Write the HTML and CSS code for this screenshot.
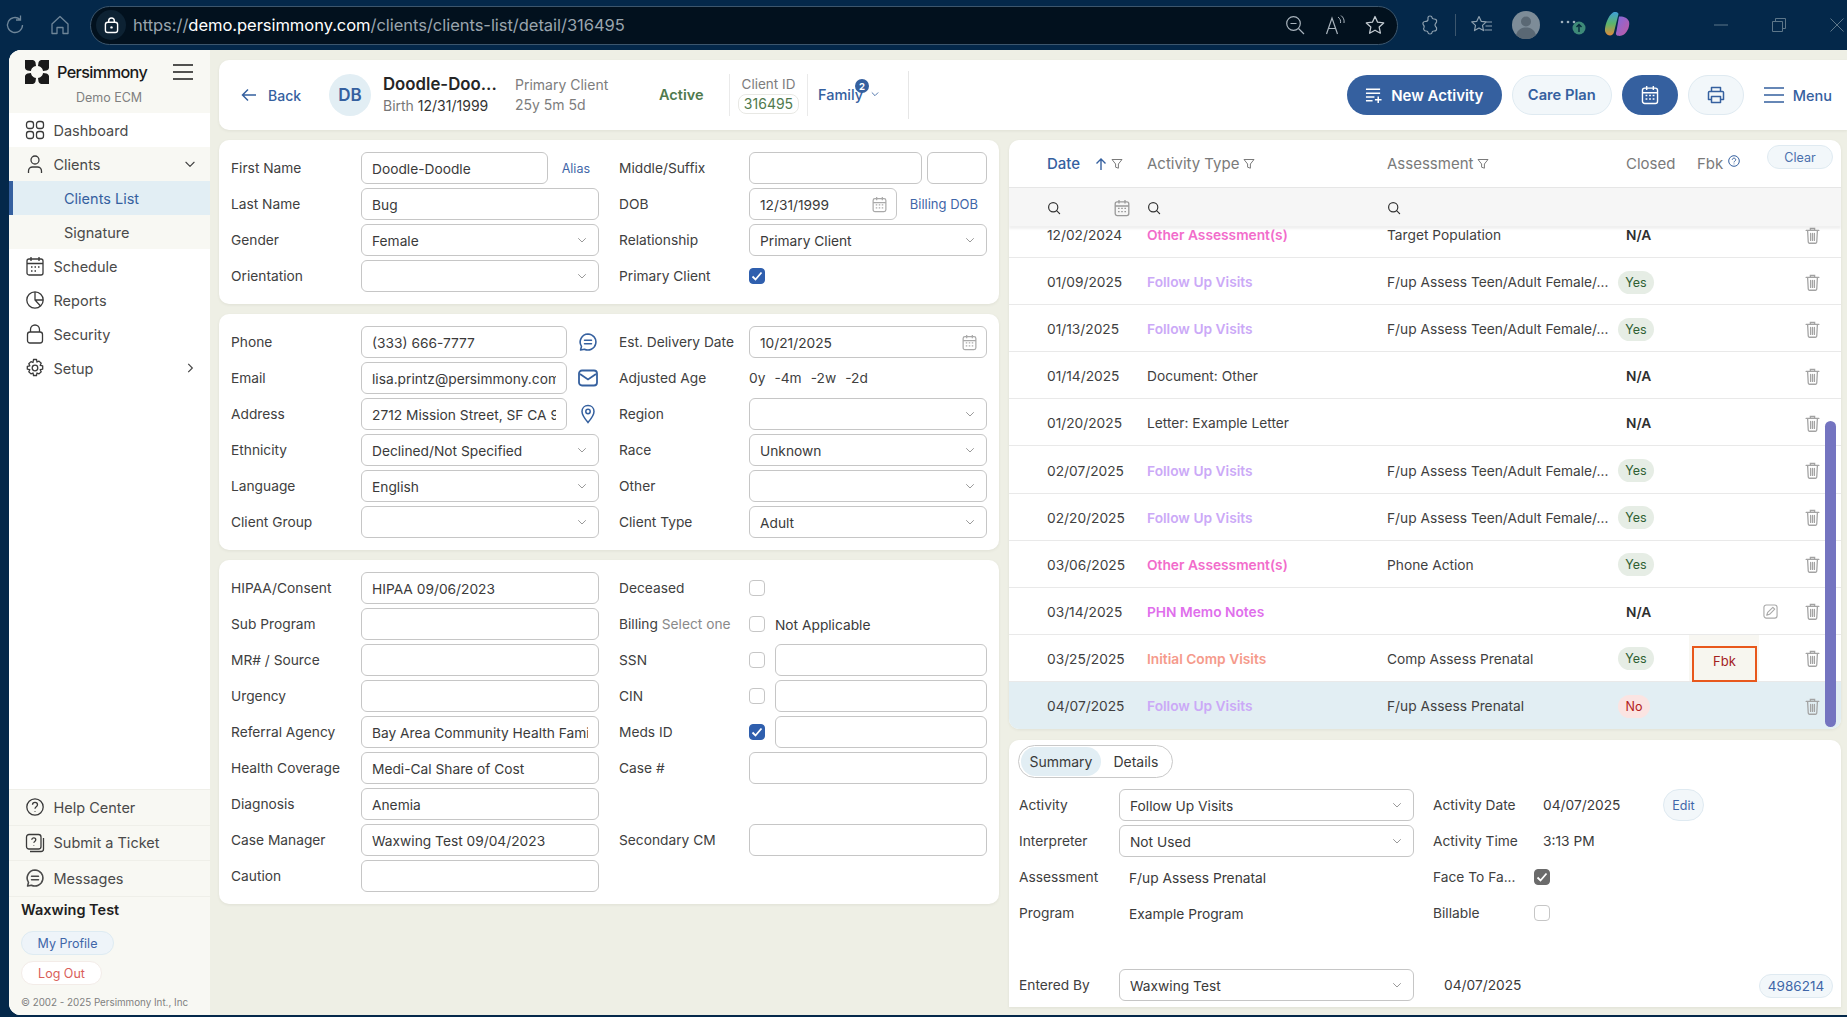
FILE: index.html
```html
<!DOCTYPE html>
<html lang="en">
<head>
<meta charset="utf-8">
<title>Persimmony - Client Detail</title>
<link rel="stylesheet" href="styles.css">
</head>
<body>
<svg class="sprite" xmlns="http://www.w3.org/2000/svg">
  <symbol id="chev" viewBox="0 0 12 12"><path d="M2.5 4.5 6 8l3.5-3.5" fill="none" stroke="currentColor" stroke-width="1" stroke-linecap="round" stroke-linejoin="round"/></symbol>
  <symbol id="cal" viewBox="0 0 16 18"><rect x="1.2" y="2.8" width="13.6" height="13.8" rx="2" fill="none" stroke="currentColor" stroke-width="1.3"/><path d="M1.2 7h13.6M5 1v3.4M11 1v3.4" fill="none" stroke="currentColor" stroke-width="1.3"/><path d="M4 9.4h1.6M7.2 9.4h1.6M10.4 9.4H12M4 12.6h1.6M7.2 12.6h1.6M10.4 12.6H12" stroke="currentColor" stroke-width="1.4"/></symbol>
  <symbol id="search" viewBox="0 0 14 14"><circle cx="6.2" cy="6.2" r="4.6" fill="none" stroke="currentColor" stroke-width="1.2"/><path d="m9.6 9.6 3 3" stroke="currentColor" stroke-width="1.2" stroke-linecap="round"/></symbol>
  <symbol id="funnel" viewBox="0 0 12 12"><path d="M1 1.5h10L7.4 6v4.2l-2.8-1V6z" fill="none" stroke="currentColor" stroke-width="1" stroke-linejoin="round"/></symbol>
  <symbol id="trash" viewBox="0 0 14 16"><path d="M1 3.2h12M5 3V1.4h4V3M2.4 3.4l.6 10.8c0 .7.5 1.1 1.1 1.1h5.8c.6 0 1.1-.4 1.1-1.1l.6-10.8M5.2 6v6.6M8.8 6v6.6M7 6v6.6" fill="none" stroke="currentColor" stroke-width="1.2" stroke-linecap="round"/></symbol>
  <symbol id="bubble" viewBox="0 0 20 20"><path d="M10 2a8 8 0 1 1-3.6 15.2L2.6 18l.9-3.6A8 8 0 0 1 10 2z" fill="none" stroke="currentColor" stroke-width="1.6" stroke-linejoin="round"/><path d="M6.5 8.2h7M6.5 11.8h7" stroke="currentColor" stroke-width="1.5" stroke-linecap="round"/></symbol>
</svg>

<div class="chrome">
  <svg class="ic-chrome ic-reload" viewBox="0 0 24 24"><path d="M19.5 12a7.5 7.5 0 1 1-2.4-5.5M17.500 2.500v4.500h-4.500" fill="none" stroke="#6f8699" stroke-width="1.3"/></svg>
  <svg class="ic-chrome ic-home" viewBox="0 0 24 24"><path d="M4 11 12 3.500 20 11v9.500h-5v-6H9v6H4z" fill="none" stroke="#6f8699" stroke-width="1.3" stroke-linejoin="round"/></svg>
  <div class="address">
    <span class="lock"><svg viewBox="0 0 16 18" width="15" height="17"><rect x="1.500" y="5.500" width="13" height="11" rx="2.500" fill="none" stroke="#fff" stroke-width="1.500"/><path d="M5 5.500V4a3 3 0 0 1 6 0v1.500" fill="none" stroke="#fff" stroke-width="1.500"/><circle cx="8" cy="11" r="1.300" fill="#fff"/></svg></span>
    <div class="url"><span class="dim">https://</span>demo.persimmony.com<span class="dim">/clients/clients-list/detail/316495</span></div>
    <div class="addr-tools">
      <svg viewBox="0 0 22 22" width="22" height="22"><circle cx="9.500" cy="9.500" r="6.800" fill="none" stroke="#a9b4bd" stroke-width="1.200"/><path d="m14.500 14.500 5.500 5.500M6.500 9.500h6" stroke="#a9b4bd" stroke-width="1.200"/></svg>
      <svg viewBox="0 0 22 22" width="22" height="22"><path d="M2.500 20 8 4l5.500 16M4.500 14.500h7" fill="none" stroke="#a9b4bd" stroke-width="1.200"/><path d="M14 3c2 1.500 3 3.500 2.500 6M17 1.500c2.500 2 3.500 4.500 3 7.500" fill="none" stroke="#a9b4bd" stroke-width="1"/></svg>
      <svg viewBox="0 0 22 22" width="22" height="22"><path d="m11 2.500 2.600 5.700 6.100.7-4.500 4.200 1.200 6.100L11 16.200 5.600 19.200l1.200-6.100L2.300 8.900l6.100-.7z" fill="none" stroke="#c2cad0" stroke-width="1.300" stroke-linejoin="round"/></svg>
    </div>
  </div>
  <div class="chrome-tools">
    <svg viewBox="0 0 22 22" width="22" height="22"><path d="M9 3.500c0-2 4-2 4 0 0 1 1 1.500 2 1.500 2 0 3 1 2.500 3-.3 1-1.500 1.500-1.500 3s1.500 2 1.500 3c.5 2-.5 3-2.500 3-1 0-2 .5-2 1.500 0 2-4 2-4 0 0-1-1-1.500-2-1.500-2 0-3-2-2-3.500.5-1 .5-1.500-.5-2.500-1.200-1.300-.5-3.500 1.500-3.500 1.500 0 3-.500 3-2z" fill="none" stroke="#8ea0af" stroke-width="1.200"/></svg>
    <i class="chrome-sep"></i>
    <svg viewBox="0 0 24 22" width="24" height="22"><path d="m9 2.500 2.200 4.800 5.100.6-3.800 3.500 1 5.200L9 14l-4.500 2.600 1-5.200L1.700 7.900l5.100-.6zM16 8h6M15.500 12H22M14.500 16H22" fill="none" stroke="#8ea0af" stroke-width="1.200" stroke-linejoin="round"/></svg>
    <svg class="avatar-ic" viewBox="0 0 28 28" width="28" height="28"><circle cx="14" cy="14" r="14" fill="#7d8c98"/><circle cx="14" cy="10.500" r="5" fill="#5a6874"/><path d="M4 24c2-6 6-7.500 10-7.500s8 1.500 10 7.500a14 14 0 0 1-20 0z" fill="#5a6874"/></svg>
    <span class="more"><svg viewBox="0 0 30 24" width="30" height="24"><circle cx="3" cy="9" r="1.300" fill="#9fb0bd"/><circle cx="9" cy="9" r="1.300" fill="#9fb0bd"/><circle cx="15" cy="9" r="1.300" fill="#9fb0bd"/><circle cx="20" cy="15" r="6.500" fill="#3e8a78"/><path d="M20 19v-7.500M17.500 14l2.500-2.500 2.500 2.500" fill="none" stroke="#06293c" stroke-width="1.400"/></svg></span>
    <svg class="copilot" viewBox="0 0 28 28" width="28" height="28"><defs><linearGradient id="cop1" x1="0" y1="0" x2="0" y2="1"><stop offset="0" stop-color="#3f9fd8"/><stop offset=".5" stop-color="#5cb46a"/><stop offset="1" stop-color="#e08a3c"/></linearGradient><linearGradient id="cop2" x1="0" y1="0" x2="1" y2="1"><stop offset="0" stop-color="#7d6ae0"/><stop offset="1" stop-color="#c45aa0"/></linearGradient></defs><path d="M10 1.500c2-1 5-.500 5.500 1.500L11 21c-.5 2-2 3.500-4 3.500-3 0-5.500-3-5-6.500.5-5 3-13 8-16.500z" fill="url(#cop1)"/><path d="M16 5.500c4-.5 9 1.500 10 5 1 4-1 10-5 13-2 1.500-6 2-7.500.5-1-1-.5-2 0-4z" fill="url(#cop2)"/></svg>
    <div class="win-btns">
      <svg viewBox="0 0 14 14" width="14" height="14"><path d="M0 7h14" stroke="#5d7689"/></svg>
      <svg viewBox="0 0 14 14" width="14" height="14"><path d="M.5 3.500h10v10H.5zM3.500 3V.5h10v10H11" fill="none" stroke="#5d7689"/></svg>
      <svg viewBox="0 0 14 14" width="14" height="14"><path d="m.5.500 13 13m0-13-13 13" stroke="#5d7689"/></svg>
    </div>
  </div>
</div>

<div class="app">
  <aside class="sidebar">
    <div class="brand">
      <div class="brand-top">
        <svg class="logo" viewBox="0 0 24 24" width="24" height="24"><path d="M0 0h7.500c1.500 0 2.500 1 3 2.500l.5 3.500c-2.500.2-4.800 2.500-5 5l-3.500-.5C1 10 0 9 0 7.500zM24 0h-7.500c-1.500 0-2.500 1-3 2.500L13 6c2.500.2 4.800 2.500 5 5l3.500-.5C23 10 24 9 24 7.500zM0 24h7.500c1.500 0 2.500-1 3-2.500L11 18c-2.500-.2-4.800-2.500-5-5l-3.500.5C1 14 0 15 0 16.500zM24 24h-7.500c-1.500 0-2.500-1-3-2.500L13 18c2.500-.2 4.800-2.500 5-5l3.500.5c1.500.5 2.500 1.500 2.500 3z" fill="#1a1a1a"/></svg>
        <span class="brand-name">Persimmony</span>
        <svg class="burger" viewBox="0 0 20 16" width="20" height="16"><path d="M0 1h20M0 8h20M0 15h20" stroke="#1a1a1a" stroke-width="1.700"/></svg>
      </div>
      <div class="brand-sub">Demo ECM</div>
    </div>
    <nav class="nav">
      <a class="nav-item"><svg class="nav-ic" viewBox="0 0 20 20"><rect x="1.500" y="1.500" width="7" height="7" rx="2.500"/><rect x="11.500" y="1.500" width="7" height="7" rx="2.500"/><rect x="1.500" y="11.500" width="7" height="7" rx="2.500"/><rect x="11.500" y="11.500" width="7" height="7" rx="2.500"/></svg>Dashboard</a>
      <a class="nav-item nav-tint"><svg class="nav-ic" viewBox="0 0 20 20"><circle cx="10" cy="6" r="4"/><path d="M3.500 19v-2c0-2.500 2-4 4-4h5c2 0 4 1.500 4 4v2"/></svg>Clients<svg class="nav-chev" viewBox="0 0 12 12"><use href="#chev"/></svg></a>
      <a class="nav-item nav-sub nav-active">Clients List</a>
      <a class="nav-item nav-sub nav-tint">Signature</a>
      <a class="nav-item"><svg class="nav-ic" viewBox="0 0 18 20"><rect x="1" y="3" width="16" height="16" rx="2"/><path d="M1 7.500h16M5 1v4M13 1v4M5 11h1.500M8.500 11H10M12 11h1.500M5 15h1.500M8.500 15H10"/></svg>Schedule</a>
      <a class="nav-item"><svg class="nav-ic" viewBox="0 0 20 20"><circle cx="10" cy="10" r="8.200"/><path d="M10 2v8l5.500 6M10 10h8"/></svg>Reports</a>
      <a class="nav-item"><svg class="nav-ic" viewBox="0 0 18 20"><rect x="1.500" y="8" width="15" height="11" rx="2.500"/><path d="M4.500 8V5.500a4.500 4.500 0 0 1 9 0V8"/></svg>Security</a>
      <a class="nav-item"><svg class="nav-ic" viewBox="0 0 20 20"><circle cx="10" cy="10" r="2.800"/><path d="M8.500 1.500h3l.5 2.500 2-.9 2.200 2.100-1 2.100 2.500.6v3.200l-2.500.6 1 2.100-2.200 2.100-2-.9-.5 2.500h-3l-.5-2.500-2 .9-2.200-2.100 1-2.100-2.500-.6V8.400l2.500-.6-1-2.100 2.200-2.100 2 .9z" stroke-linejoin="round"/></svg>Setup<svg class="nav-chev" viewBox="0 0 12 12"><path d="M4.500 2.500 8 6l-3.500 3.500" fill="none" stroke="currentColor"/></svg></a>
    </nav>
    <div class="side-foot">
      <a class="foot-item"><svg class="nav-ic" viewBox="0 0 20 20"><circle cx="10" cy="10" r="8.200"/><path d="M7.500 7.800c0-3.200 5-3.200 5 0 0 2-2.500 2-2.500 4"/><path d="M10 14v.6" stroke-width="1.800"/></svg>Help Center</a>
      <a class="foot-item"><svg class="nav-ic" viewBox="0 0 20 20"><rect x="1.500" y="1.500" width="14.500" height="14.500" rx="2.500"/><path d="M18.500 5v11c0 1.500-1 2.500-2.500 2.500H5M6.800 6.800c0-2.500 4-2.500 4 0 0 1.600-2 1.600-2 3M8.800 12v.5"/></svg>Submit a Ticket</a>
      <a class="foot-item"><svg class="nav-ic" viewBox="0 0 20 20"><use href="#bubble"/></svg>Messages</a>
      <div class="user-name">Waxwing Test</div>
      <a class="pill pill-profile">My Profile</a>
      <a class="pill pill-logout">Log Out</a>
      <div class="copy">© 2002 - 2025 Persimmony Int., Inc</div>
    </div>
  </aside>

  <main class="main">
    <header class="topbar">
      <a class="back"><svg viewBox="0 0 16 14" width="16" height="14"><path d="M15 7H2M7 1.500 1.500 7 7 12.500" fill="none" stroke="currentColor" stroke-width="1.500"/></svg>Back</a>
      <span class="initials">DB</span>
      <div class="who">
        <div class="who-name">Doodle-Doo...</div>
        <div class="who-sub"><span class="muted">Birth</span> 12/31/1999</div>
      </div>
      <div class="role">
        <div>Primary Client</div>
        <div>25y 5m 5d</div>
      </div>
      <div class="status">Active</div>
      <div class="client-id">
        <div class="cid-label">Client ID</div>
        <div class="cid-value">316495</div>
      </div>
      <div class="family"><span class="fam-text">Family</span><span class="fam-badge">2</span><svg viewBox="0 0 12 12" width="10" height="10"><use href="#chev"/></svg></div>
      <div class="actions">
        <a class="btn btn-solid btn-new"><svg viewBox="0 0 18 18" width="17" height="17"><path d="M1 2.500h15M1 6.500h15M1 10.500h9M1 14.500h7M14 10v7M10.500 13.500h7" fill="none" stroke="#fff" stroke-width="1.600"/></svg>New Activity</a>
        <a class="btn btn-soft btn-care">Care Plan</a>
        <a class="btn btn-solid btn-round"><svg viewBox="0 0 16 18" width="18" height="20"><use href="#cal"/></svg></a>
        <a class="btn btn-soft btn-round"><svg viewBox="0 0 18 18" width="18" height="18"><path d="M4.500 6V1.500h9V6M4.500 13.500h-3V6.500c0-.5.500-1 1-1h13c.5 0 1 .5 1 1v7h-3M4.500 10.500h9v6h-9z" fill="none" stroke="currentColor" stroke-width="1.500" stroke-linejoin="round"/></svg></a>
        <a class="menu-link"><svg viewBox="0 0 20 16" width="20" height="16"><path d="M0 1h20M0 8h20M0 15h20" stroke="currentColor" stroke-width="1.600"/></svg>Menu</a>
      </div>
    </header>

    <div class="content">
      <section class="left">
        <div class="card form">
          <div class="col">
            <div class="field"><label>First Name</label><div class="ctl"><div class="input"><span>Doodle-Doodle</span></div><a class="link alias">Alias</a></div></div>
            <div class="field"><label>Last Name</label><div class="ctl"><div class="input"><span>Bug</span></div></div></div>
            <div class="field"><label>Gender</label><div class="ctl"><div class="input select"><span>Female</span><svg viewBox="0 0 12 12"><use href="#chev"/></svg></div></div></div>
            <div class="field"><label>Orientation</label><div class="ctl"><div class="input select"><span></span><svg viewBox="0 0 12 12"><use href="#chev"/></svg></div></div></div>
          </div>
          <div class="col">
            <div class="field"><label>Middle/Suffix</label><div class="ctl"><div class="input"><span></span></div><div class="input suffix"><span></span></div></div></div>
            <div class="field"><label>DOB</label><div class="ctl"><div class="input select"><span>12/31/1999</span><svg class="cal-ic" viewBox="0 0 16 18"><use href="#cal"/></svg></div><a class="link billing">Billing DOB</a></div></div>
            <div class="field"><label>Relationship</label><div class="ctl"><div class="input select"><span>Primary Client</span><svg viewBox="0 0 12 12"><use href="#chev"/></svg></div></div></div>
            <div class="field"><label>Primary Client</label><div class="ctl"><i class="check on"><svg viewBox="0 0 16 16"><path d="m3.500 8.500 3 3 6-7" fill="none" stroke="#fff" stroke-width="1.800"/></svg></i></div></div>
          </div>
        </div>

        <div class="card form">
          <div class="col">
            <div class="field"><label>Phone</label><div class="ctl"><div class="input"><span>(333) 666-7777</span></div><svg class="side-ic" viewBox="0 0 20 20"><use href="#bubble"/></svg></div></div>
            <div class="field"><label>Email</label><div class="ctl"><div class="input"><span>lisa.printz@persimmony.com</span></div><svg class="side-ic" viewBox="0 0 20 18"><rect x="1" y="1.500" width="18" height="15" rx="3" fill="none" stroke="currentColor" stroke-width="1.800"/><path d="m2 5 8 5.500L18 5" fill="none" stroke="currentColor" stroke-width="1.800"/></svg></div></div>
            <div class="field"><label>Address</label><div class="ctl"><div class="input"><span>2712 Mission Street, SF CA 94110</span></div><svg class="side-ic" viewBox="0 0 20 20"><path d="M10 1.500c3.500 0 6 2.500 6 6 0 4-3.500 8-6 11-2.500-3-6-7-6-11 0-3.500 2.500-6 6-6z" fill="none" stroke="currentColor" stroke-width="1.500"/><circle cx="10" cy="7.500" r="2.200" fill="none" stroke="currentColor" stroke-width="1.500"/></svg></div></div>
            <div class="field"><label>Ethnicity</label><div class="ctl"><div class="input select"><span>Declined/Not Specified</span><svg viewBox="0 0 12 12"><use href="#chev"/></svg></div></div></div>
            <div class="field"><label>Language</label><div class="ctl"><div class="input select"><span>English</span><svg viewBox="0 0 12 12"><use href="#chev"/></svg></div></div></div>
            <div class="field"><label>Client Group</label><div class="ctl"><div class="input select"><span></span><svg viewBox="0 0 12 12"><use href="#chev"/></svg></div></div></div>
          </div>
          <div class="col">
            <div class="field"><label>Est. Delivery Date</label><div class="ctl"><div class="input select"><span>10/21/2025</span><svg class="cal-ic" viewBox="0 0 16 18"><use href="#cal"/></svg></div></div></div>
            <div class="field"><label>Adjusted Age</label><div class="ctl age"><span>0y</span><span>-4m</span><span>-2w</span><span>-2d</span></div></div>
            <div class="field"><label>Region</label><div class="ctl"><div class="input select"><span></span><svg viewBox="0 0 12 12"><use href="#chev"/></svg></div></div></div>
            <div class="field"><label>Race</label><div class="ctl"><div class="input select"><span>Unknown</span><svg viewBox="0 0 12 12"><use href="#chev"/></svg></div></div></div>
            <div class="field"><label>Other</label><div class="ctl"><div class="input select"><span></span><svg viewBox="0 0 12 12"><use href="#chev"/></svg></div></div></div>
            <div class="field"><label>Client Type</label><div class="ctl"><div class="input select"><span>Adult</span><svg viewBox="0 0 12 12"><use href="#chev"/></svg></div></div></div>
          </div>
        </div>

        <div class="card form">
          <div class="col">
            <div class="field"><label>HIPAA/Consent</label><div class="ctl"><div class="input"><span>HIPAA 09/06/2023</span></div></div></div>
            <div class="field"><label>Sub Program</label><div class="ctl"><div class="input"><span></span></div></div></div>
            <div class="field"><label>MR# / Source</label><div class="ctl"><div class="input"><span></span></div></div></div>
            <div class="field"><label>Urgency</label><div class="ctl"><div class="input"><span></span></div></div></div>
            <div class="field"><label>Referral Agency</label><div class="ctl"><div class="input"><span>Bay Area Community Health Family Services</span></div></div></div>
            <div class="field"><label>Health Coverage</label><div class="ctl"><div class="input"><span>Medi-Cal Share of Cost</span></div></div></div>
            <div class="field"><label>Diagnosis</label><div class="ctl"><div class="input"><span>Anemia</span></div></div></div>
            <div class="field"><label>Case Manager</label><div class="ctl"><div class="input"><span>Waxwing Test 09/04/2023</span></div></div></div>
            <div class="field"><label>Caution</label><div class="ctl"><div class="input"><span></span></div></div></div>
          </div>
          <div class="col">
            <div class="field"><label>Deceased</label><div class="ctl"><i class="check"></i></div></div>
            <div class="field"><label>Billing <em>Select one</em></label><div class="ctl"><i class="check"></i><span class="check-text">Not Applicable</span></div></div>
            <div class="field"><label>SSN</label><div class="ctl"><i class="check"></i><div class="input"><span></span></div></div></div>
            <div class="field"><label>CIN</label><div class="ctl"><i class="check"></i><div class="input"><span></span></div></div></div>
            <div class="field"><label>Meds ID</label><div class="ctl"><i class="check on"><svg viewBox="0 0 16 16"><path d="m3.500 8.500 3 3 6-7" fill="none" stroke="#fff" stroke-width="1.800"/></svg></i><div class="input"><span></span></div></div></div>
            <div class="field"><label>Case #</label><div class="ctl"><div class="input"><span></span></div></div></div>
            <div class="field"></div>
            <div class="field"><label>Secondary CM</label><div class="ctl"><div class="input"><span></span></div></div></div>
          </div>
        </div>
      </section>

      <section class="right">
        <div class="card table">
          <div class="thead trow">
            <div class="th th-date"><span class="th-active">Date</span><svg class="arrow" viewBox="0 0 12 14" width="12" height="14"><path d="M6 13V2M1.500 6.500 6 2l4.500 4.500" fill="none" stroke="#35609f" stroke-width="1.400"/></svg><svg class="fn" viewBox="0 0 12 12"><use href="#funnel"/></svg></div>
            <div class="th">Activity Type<svg class="fn" viewBox="0 0 12 12"><use href="#funnel"/></svg></div>
            <div class="th">Assessment<svg class="fn" viewBox="0 0 12 12"><use href="#funnel"/></svg></div>
            <div class="th th-closed">Closed</div>
            <div class="th th-fbk">Fbk<svg class="help" viewBox="0 0 12 12" width="12" height="12"><circle cx="6" cy="6" r="5.300" fill="none" stroke="#35609f"/><path d="M4.300 4.800c0-2.200 3.400-2.200 3.400 0 0 1.300-1.700 1.300-1.700 2.600M6 8.600v.7" fill="none" stroke="#35609f"/></svg></div>
            <div></div>
            <a class="clear">Clear</a>
          </div>
          <div class="tfilter trow">
            <div class="tf-date"><svg viewBox="0 0 14 14" width="14" height="14"><use href="#search"/></svg><svg class="tf-cal" viewBox="0 0 16 18" width="16" height="18"><use href="#cal"/></svg></div>
            <div><svg viewBox="0 0 14 14" width="14" height="14"><use href="#search"/></svg></div>
            <div><svg viewBox="0 0 14 14" width="14" height="14"><use href="#search"/></svg></div>
          </div>
          <div class="tbody">
            <div class="trow row first"><div>12/02/2024</div><div class="act pink">Other Assessment(s)</div><div>Target Population</div><div class="na">N/A</div><div></div><div></div><svg class="del" viewBox="0 0 14 16"><use href="#trash"/></svg></div>
            <div class="trow row"><div>01/09/2025</div><div class="act lilac">Follow Up Visits</div><div>F/up Assess Teen/Adult Female/...</div><div><span class="yes">Yes</span></div><div></div><div></div><svg class="del" viewBox="0 0 14 16"><use href="#trash"/></svg></div>
            <div class="trow row"><div>01/13/2025</div><div class="act lilac">Follow Up Visits</div><div>F/up Assess Teen/Adult Female/...</div><div><span class="yes">Yes</span></div><div></div><div></div><svg class="del" viewBox="0 0 14 16"><use href="#trash"/></svg></div>
            <div class="trow row"><div>01/14/2025</div><div>Document: Other</div><div></div><div class="na">N/A</div><div></div><div></div><svg class="del" viewBox="0 0 14 16"><use href="#trash"/></svg></div>
            <div class="trow row"><div>01/20/2025</div><div>Letter: Example Letter</div><div></div><div class="na">N/A</div><div></div><div></div><svg class="del" viewBox="0 0 14 16"><use href="#trash"/></svg></div>
            <div class="trow row"><div>02/07/2025</div><div class="act lilac">Follow Up Visits</div><div>F/up Assess Teen/Adult Female/...</div><div><span class="yes">Yes</span></div><div></div><div></div><svg class="del" viewBox="0 0 14 16"><use href="#trash"/></svg></div>
            <div class="trow row"><div>02/20/2025</div><div class="act lilac">Follow Up Visits</div><div>F/up Assess Teen/Adult Female/...</div><div><span class="yes">Yes</span></div><div></div><div></div><svg class="del" viewBox="0 0 14 16"><use href="#trash"/></svg></div>
            <div class="trow row"><div>03/06/2025</div><div class="act pink">Other Assessment(s)</div><div>Phone Action</div><div><span class="yes">Yes</span></div><div></div><div></div><svg class="del" viewBox="0 0 14 16"><use href="#trash"/></svg></div>
            <div class="trow row"><div>03/14/2025</div><div class="act orchid">PHN Memo Notes</div><div></div><div class="na">N/A</div><div></div><svg class="note" viewBox="0 0 16 16"><rect x="1" y="1" width="14" height="14" rx="2.500" fill="none" stroke="currentColor" stroke-width="1.200"/><path d="m4 12 1-3 5.500-5.500 2 2L7 11z" fill="#fff" stroke="currentColor" stroke-width="1.200" stroke-linejoin="round"/></svg><svg class="del" viewBox="0 0 14 16"><use href="#trash"/></svg></div>
            <div class="trow row"><div>03/25/2025</div><div class="act salmon">Initial Comp Visits</div><div>Comp Assess Prenatal</div><div><span class="yes">Yes</span></div><div class="fbk-cell"><span class="fbk">Fbk</span></div><div></div><svg class="del" viewBox="0 0 14 16"><use href="#trash"/></svg></div>
            <div class="trow row selected"><div>04/07/2025</div><div class="act lilac">Follow Up Visits</div><div>F/up Assess Prenatal</div><div><span class="no">No</span></div><div></div><div></div><svg class="del" viewBox="0 0 14 16"><use href="#trash"/></svg></div>
          </div>
          <div class="scrollbar"></div>
        </div>

        <div class="card detail">
          <div class="tabs"><span class="tab tab-on">Summary</span><span class="tab">Details</span></div>
          <div class="detail-grid">
            <div class="dl-col">
              <div class="dfield"><label>Activity</label><div class="input select"><span>Follow Up Visits</span><svg viewBox="0 0 12 12"><use href="#chev"/></svg></div></div>
              <div class="dfield"><label>Interpreter</label><div class="input select"><span>Not Used</span><svg viewBox="0 0 12 12"><use href="#chev"/></svg></div></div>
              <div class="dfield"><label>Assessment</label><div class="dval">F/up Assess Prenatal</div></div>
              <div class="dfield"><label>Program</label><div class="dval">Example Program</div></div>
            </div>
            <div class="dr-col">
              <div class="dfield"><label>Activity Date</label><div class="dplain">04/07/2025</div><a class="edit">Edit</a></div>
              <div class="dfield"><label>Activity Time</label><div class="dplain">3:13 PM</div></div>
              <div class="dfield"><label>Face To Fa...</label><i class="check grey"><svg viewBox="0 0 16 16"><path d="m3.500 8.500 3 3 6-7" fill="none" stroke="#fff" stroke-width="1.800"/></svg></i></div>
              <div class="dfield"><label>Billable</label><i class="check"></i></div>
            </div>
          </div>
          <div class="entered">
            <div class="dfield dfield-entered"><label>Entered By</label><div class="input select"><span>Waxwing Test</span><svg viewBox="0 0 12 12"><use href="#chev"/></svg></div></div>
            <div class="entered-date">04/07/2025</div>
            <span class="rec-id">4986214</span>
          </div>
        </div>
      </section>
    </div>
  </main>
</div>
</body>
</html>
```
FILE: styles.css
```css
* { box-sizing: border-box; }
html, body { margin: 0; height: 100%; }
body {
  width: 1847px; height: 1017px; overflow: hidden;
  background: #04284a;
  font-family: Inter, "Liberation Sans", sans-serif;
  font-size: 13.75px; color: #3a3a3a;
  display: flex; flex-direction: column;
}
.sprite { display: none; }
label { font-weight: 400; }
em { font-style: normal; color: #8a8a8a; }
i { font-style: normal; }

/* browser chrome */
.chrome { height: 50px; flex: none; display: flex; align-items: center; padding: 0 0 0 3px; background: #04284a; }
.ic-chrome { width: 24px; height: 24px; flex: none; }
.ic-home { margin-left: 21px; }
.address {
  width: 1308px; height: 39px; margin-left: 18px; flex: none;
  background: #02111e; border: 1px solid #3c566d; border-radius: 20px;
  display: flex; align-items: center; padding-left: 5px;
}
.lock { width: 30px; display: flex; justify-content: center; background: #0d2233; border-radius: 50%; height: 30px; align-items: center; flex: none; }
.url { margin-left: 7px; font-size: 16.55px; color: #fff; white-space: nowrap; letter-spacing: -.05px; }
.dim { color: #9aa5ae; }
.addr-tools { margin-left: auto; display: flex; gap: 18px; padding-right: 11px; }
.chrome-tools { display: flex; align-items: center; margin-left: 21px; flex: 1; }
.chrome-sep { width: 1px; height: 22px; background: #3c566d; margin: 0 14px; }
.avatar-ic { margin-left: 18px; }
.more { margin-left: 19px; height: 24px; }
.copilot { margin-left: 14px; }
.win-btns { display: flex; gap: 44px; margin-left: 83px; }

/* app shell */
.app { flex: none; height: 965px; display: flex; margin-left: 9px; background: #eeefe5; border-radius: 12px 0 0 12px; overflow: hidden; }
.sidebar { width: 201px; flex: none; background: #fff; display: flex; flex-direction: column; }
.brand { height: 63px; background: #f8f8f3; padding: 10px 17px 0 16px; }
.brand-top { display: flex; align-items: center; }
.logo { flex: none; }
.brand-name { margin-left: 8px; font-size: 16.2px; font-weight: 500; color: #1a1a1a; letter-spacing: -.6px; }
.burger { margin-left: auto; }
.brand-sub { text-align: center; margin-top: 6px; font-size: 12.5px; color: #808080; }
.nav-item, .foot-item { display: flex; align-items: center; font-size: 14.5px; color: #4a4a4a; }
.nav-item { height: 34px; padding-left: 16px; }
.nav-ic { width: 20px; height: 20px; margin-right: 8.5px; flex: none; fill: none; stroke: #3a3a3a; stroke-width: 1.3; }
.nav-tint { background: #f8f8f3; }
.nav-sub { padding-left: 55px; }
.nav-active { background: #e2eef4; color: #35609f; border-left: 4px solid #35609f; padding-left: 51px; }
.nav-chev { width: 14px; height: 14px; margin-left: auto; margin-right: 13.5px; color: #444; }
.side-foot { margin-top: auto; background: #f8f8f3; display: flex; flex-direction: column; flex: none; height: 226px; }
.foot-item { height: 35.5px; padding-left: 16px; border-top: 1px solid #efefe9; }
.user-name { border-top: 1px solid #efefe9; padding: 4px 0 0 12px; font-size: 14.5px; font-weight: 600; color: #1f1f1f; height: 35.5px; }
.pill { display: flex; align-items: center; justify-content: center; height: 24px; border-radius: 12px; font-size: 12.5px; margin-left: 12px; }
.pill-profile { width: 93px; background: #eef4f9; border: 1px solid #deebf2; color: #3f66a8; }
.pill-logout { width: 81px; background: #fff; border: 1px solid #f3ece8; color: #d9605a; margin-top: 6px; }
.copy { font-size: 9.8px; color: #808080; padding: 12px 0 0 12px; white-space: nowrap; }

/* main */
.main { flex: 1; min-width: 0; padding: 10px 0 0 9px; display: flex; flex-direction: column; gap: 10px; }
.topbar {
  height: 70px; flex: none; background: #fff; border-radius: 10px 0 0 10px;
  display: flex; align-items: center; padding-left: 22px; box-shadow: 0 1px 3px rgba(60,60,40,.08);
}
.back { display: flex; align-items: center; gap: 11px; color: #35609f; font-weight: 500; font-size: 14px; width: 88px; flex: none; }
.initials { width: 42px; height: 42px; border-radius: 50%; background: #e2eef4; color: #35609f; font-size: 17px; font-weight: 600; display: flex; align-items: center; justify-content: center; flex: none; }
.who { margin: -2px 0 0 12px; width: 132px; flex: none; }
.who-name { font-size: 16.8px; font-weight: 600; color: #262626; white-space: nowrap; }
.who-sub { font-size: 14px; margin-top: 3px; color: #333; }
.muted { color: #777; }
.role { color: #7d7d7d; font-size: 14px; line-height: 20px; width: 144px; flex: none; }
.status { color: #4f7a4d; font-weight: 600; font-size: 14.5px; width: 70px; flex: none; padding-bottom: 2px; }
.client-id { border-left: 1px solid #eaeaea; border-right: 1px solid #eaeaea; width: 79px; height: 42px; display: flex; flex-direction: column; align-items: center; flex: none; }
.cid-label { color: #7d7d7d; font-size: 13.5px; line-height: 20px; }
.cid-value { color: #4f7a4d; border: 1px solid #e8e8e4; border-radius: 8px; padding: 0 5px; font-size: 14px; line-height: 18px; }
.family { position: relative; height: 48px; width: 101px; padding: 0 0 2px 10px; border-right: 1px solid #e6e6e6; display: flex; align-items: center; gap: 7px; color: #35609f; font-weight: 500; font-size: 14.5px; flex: none; }
.fam-badge { position: absolute; left: 47px; top: 8px; width: 14px; height: 14px; border-radius: 50%; background: #35609f; color: #fff; font-size: 9.5px; font-weight: 700; display: flex; align-items: center; justify-content: center; }
.family svg { color: #35609f; }
.actions { margin-left: auto; display: flex; align-items: center; gap: 10px; padding-right: 15px; }
.btn { height: 40px; border-radius: 20px; display: flex; align-items: center; justify-content: center; font-weight: 600; font-size: 14.7px; }
.btn-solid { background: #35609f; color: #fff; }
.btn-soft { background: #f2f7fa; border: 1px solid #dfeaf1; color: #35609f; }
.btn-new { width: 155px; gap: 9px; font-size: 15px; }
.btn-care { width: 100px; }
.btn-round { width: 56px; }
.menu-link { display: flex; align-items: center; gap: 9px; color: #35609f; font-weight: 500; font-size: 14.5px; margin-left: 10px; }

.content { flex: 1; min-height: 0; display: grid; grid-template-columns: 780px 832px; gap: 10px; }
.left, .right { display: flex; flex-direction: column; min-width: 0; }
.left { gap: 10px; }
.right { gap: 11px; }
.card { background: #fff; border-radius: 10px; box-shadow: 0 1px 3px rgba(60,60,40,.08); }

/* forms */
.form { padding: 12px 0 12px 12px; display: grid; grid-template-columns: 368px 368px; column-gap: 20px; flex: none; }
.col { display: flex; flex-direction: column; gap: 4px; }
.field { height: 32px; display: flex; align-items: center; }
.field label { width: 130px; flex: none; white-space: nowrap; color: #404040; }
.ctl { flex: 1; min-width: 0; display: flex; align-items: center; height: 100%; }
.input {
  flex: 1; min-width: 0; height: 32px; border: 1px solid #c6c6c6; border-radius: 6px;
  background: #fff; display: flex; align-items: center; padding: 2px 10px 0; color: #3a3a3a;
}
.input > span { flex: 1; min-width: 0; overflow: hidden; white-space: nowrap; }
.select { padding-right: 8px; }
.select svg { width: 12px; height: 12px; flex: none; color: #9a9a9a; margin: -2px 2px 0 0; }
.select .cal-ic { width: 15px; height: 17px; margin: -2px 1px 0 0; color: #a9a9a9; }
.suffix { flex: none; width: 60px; margin-left: 5px; }
.link { color: #3f66a8; font-size: 12.5px; white-space: nowrap; }
.alias { margin: 0 9px 0 14px; }
.billing { margin: 0 9px 0 13px; font-size: 13px; }
.side-ic { width: 20px; height: 20px; flex: none; margin-left: 11px; margin-right: 1px; color: #35609f; }
.age { gap: 9px; color: #404040; }
.check { width: 16px; height: 16px; border: 1px solid #c6c6c6; border-radius: 4px; background: #fff; flex: none; display: block; }
.check + .input { margin-left: 10px; }
.check svg { display: block; width: 16px; height: 16px; margin: -1px; }
.check.on { background: #2f5fae; border-color: #2f5fae; }
.check.grey { background: #6b6b6b; border-color: #6b6b6b; }
.check-text { margin-left: 10px; padding-top: 2px; }

/* table */
.table { height: 589px; flex: none; position: relative; overflow: hidden; }
.trow { display: grid; grid-template-columns: 100px 240px 231px 74px 71px 42px 1fr; padding-left: 38px; align-items: center; }
.thead { height: 47px; color: #7a7a7a; font-size: 15px; }
.th { display: flex; align-items: center; white-space: nowrap; }
.th-active { color: #35609f; font-weight: 500; }
.arrow { margin-left: 15px; }
.fn { width: 12px; height: 12px; margin-left: 4px; color: #7a7a7a; }
.help { margin: -5px 0 0 5px; }
.th-closed { padding-left: 8px; }
.th-fbk { padding-left: 5px; }
.clear { position: absolute; left: 758px; top: 5px; width: 66px; height: 24px; border-radius: 12px; background: #f2f7fa; border: 1px solid #dfeaf1; color: #4a70ad; font-size: 12.5px; display: flex; align-items: center; justify-content: center; }
.tfilter { height: 39px; background: #f6f6f6; border-top: 1px solid #e6e6e6; color: #333; box-shadow: 0 3px 2px rgba(0,0,0,.06); position: relative; z-index: 1; }
.tfilter svg { display: block; margin-top: 2px; }
.tf-date { display: flex; align-items: center; gap: 53px; }
.tf-cal { color: #999; }
.tbody { height: 503px; overflow: hidden; }
.row { height: 47.1px; padding-top: 2px; border-bottom: 1px solid #e9e9e9; color: #3f3f3f; white-space: nowrap; }
.row.first { margin-top: -15px; }
.row.selected { background: #e2eef3; border-bottom: 0; }
.act { font-weight: 600; }
.pink { color: #f26ccb; }
.lilac { color: #cba9f7; }
.orchid { color: #df6fec; }
.salmon { color: #f59a8b; }
.na { font-weight: 600; color: #2f2f2f; padding-left: 8px; }
.yes, .no { display: inline-flex; align-items: center; justify-content: center; height: 23px; border-radius: 12px; font-size: 12.5px; }
.yes { width: 36px; background: #e6ede5; color: #2f5f33; }
.no { width: 32px; background: #fbe4e2; color: #b32020; }
.fbk-cell { align-self: start; display: flex; width: 70px; height: 46px; margin: -2px 0 0 -3px; padding: 11px 0 0 3px; background: #f8f7f2; }
.fbk { width: 65px; height: 36px; border: 2px solid #e8581c; background: #f7f6ef; color: #a3211e; font-size: 13px; display: flex; align-items: center; justify-content: center; padding-bottom: 6px; }
.note { width: 15px; height: 15px; color: #a9a9a9; }
.del { width: 15px; height: 17px; color: #a3a3a3; }
.scrollbar { position: absolute; left: 816px; top: 281px; width: 11px; height: 306px; border-radius: 6px; background: #7474c0; z-index: 2; }

/* detail */
.detail { height: 267px; flex: none; position: relative; padding: 5px 10px 0 9px; border-radius: 10px 10px 0 0; }
.tabs { width: 155px; height: 33px; border: 1px solid #c9c9c9; border-radius: 17px; display: flex; align-items: center; padding: 0 2px; font-size: 14px; }
.tab { height: 29px; display: flex; align-items: center; justify-content: center; color: #3a3a3a; width: 70px; }
.tab-on { width: 82px; background: #e2eef4; border-radius: 15px; margin-right: 1px; }
.detail-grid { display: flex; margin-top: 11px; }
.dl-col { width: 396px; flex: none; display: flex; flex-direction: column; gap: 4px; padding-left: 1px; }
.dr-col { padding-left: 19px; display: flex; flex-direction: column; gap: 4px; flex: 1; }
.dfield { height: 32px; display: flex; align-items: center; }
.dl-col label, .dfield-entered label { width: 100px; flex: none; color: #404040; }
.dr-col label { width: 101px; flex: none; color: #404040; white-space: nowrap; }
.dval { padding: 2px 0 0 10px; }
.dplain { width: 129px; flex: none; padding-left: 9px; }
.edit { width: 41px; height: 32px; border-radius: 16px; background: #f2f7fa; border: 1px solid #dfeaf1; color: #3f66a8; font-size: 12.5px; display: flex; align-items: center; justify-content: center; }
.entered { position: absolute; left: 10px; right: 8px; top: 229px; display: flex; align-items: center; }
.dfield-entered { width: 395px; flex: none; }
.entered-date { margin-left: 30px; }
.rec-id { margin-left: auto; width: 74px; height: 24px; margin-top: 2px; border-radius: 12px; background: #f2f7fa; border: 1px solid #dfeaf1; color: #3f66a8; font-size: 13.5px; display: flex; align-items: center; justify-content: center; }
```
